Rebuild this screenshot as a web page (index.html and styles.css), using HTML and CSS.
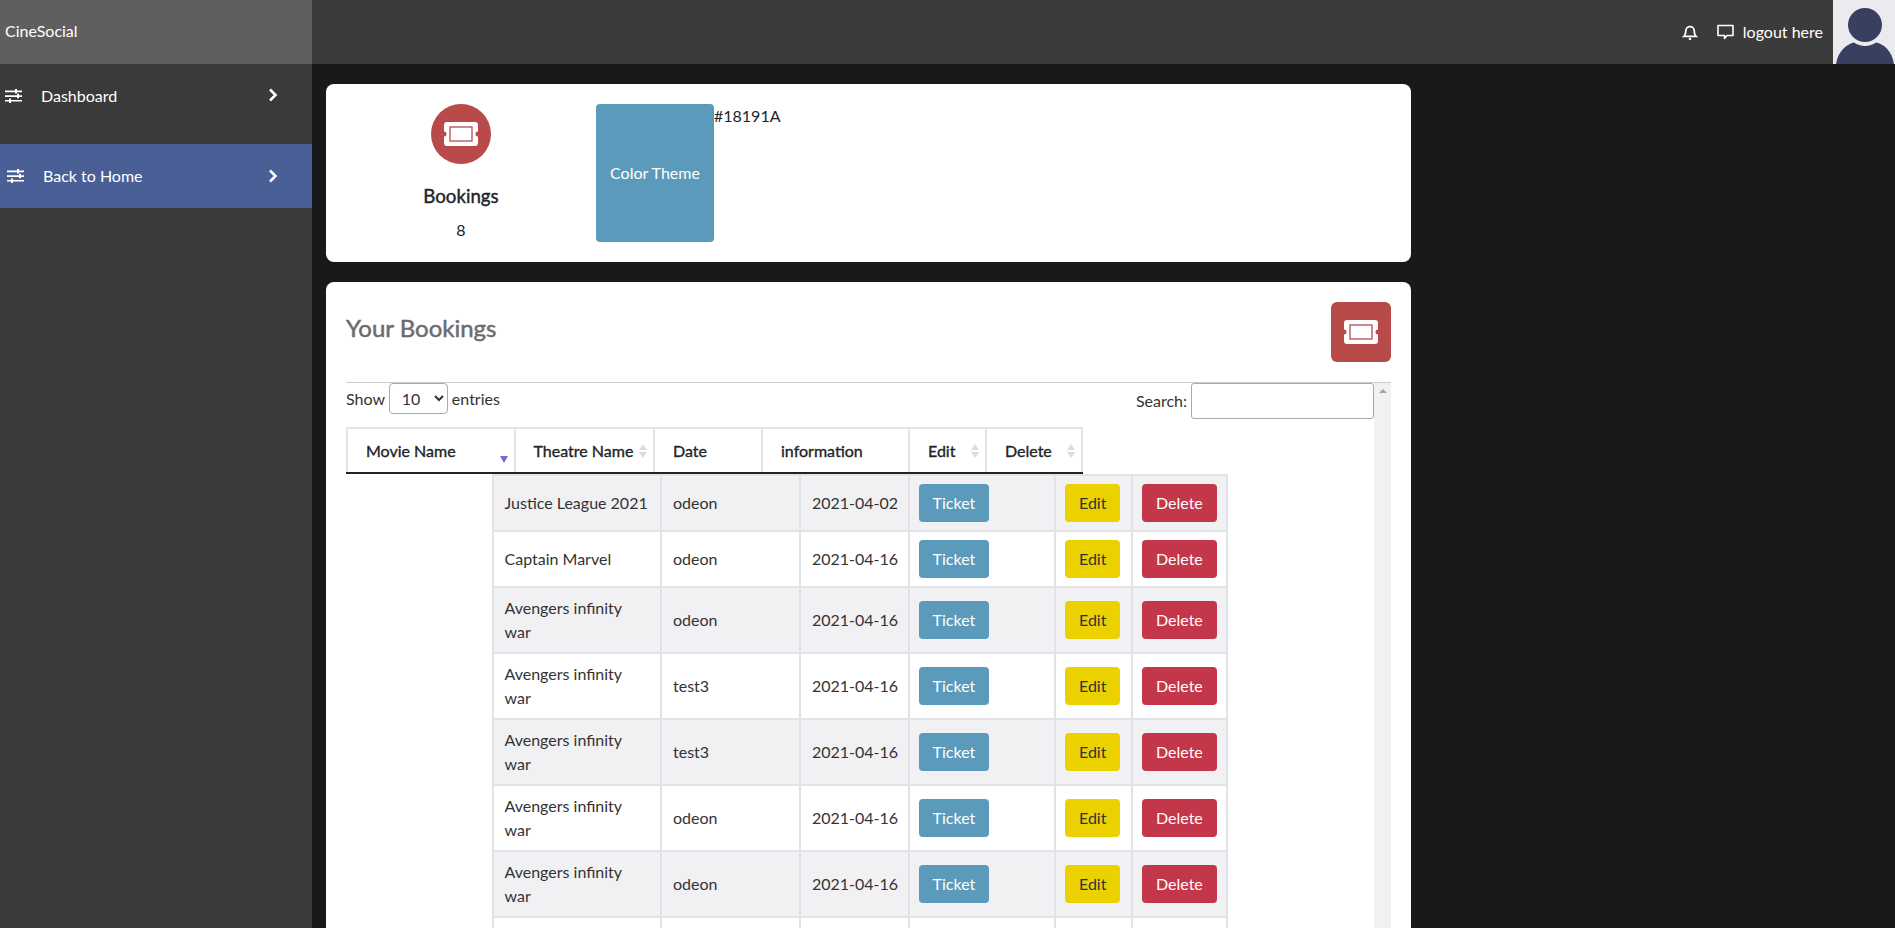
FILE: index.html
```html
<!DOCTYPE html>
<html lang="en">
<head>
<meta charset="utf-8">
<title>CineSocial</title>
<link rel="stylesheet" href="styles.css">
</head>
<body>
<svg class="defs" width="0" height="0" aria-hidden="true">
  <symbol id="ticket" viewBox="0 0 34 24">
    <path fill="#fff" d="M3 0H31a3 3 0 0 1 3 3V9.500a2.500 2.500 0 0 0 0 5V21a3 3 0 0 1-3 3H3a3 3 0 0 1-3-3V14.500a2.500 2.500 0 0 0 0-5V3a3 3 0 0 1 3-3Z"/>
    <rect x="6" y="5" width="22" height="14" fill="none" stroke="#b94a4a" stroke-width="1.300"/>
  </symbol>
  <symbol id="sliders" viewBox="0 0 17 14">
    <path fill="#fff" d="M0 1.500H17V3.200H0ZM0 6.200H17V7.900H0ZM0 10.900H17V12.600H0Z"/>
    <path fill="#fff" d="M10 0H12V4.500H10ZM12 4.800H14V9.300H12ZM4 9.500H6V14H4Z"/>
  </symbol>
  <symbol id="chevron" viewBox="0 0 10 14">
    <path fill="none" stroke="#fff" stroke-width="2.600" d="M2 1.500 7.500 7 2 12.500"/>
  </symbol>
</svg>

<header class="topbar">
  <div class="brand">CineSocial</div>
  <nav class="top-actions">
    <svg class="top-icon" viewBox="0 0 16 16"><path fill="none" stroke="#fff" stroke-width="1.800" d="M2 12.300c1.200-1.200 1.800-2.500 1.800-5.500a4.200 4.200 0 0 1 8.400 0c0 3 .6 4.300 1.800 5.500Z"/><circle cx="8" cy="15" r="1.300" fill="#fff"/></svg>
    <svg class="top-icon chat" viewBox="0 0 17 16"><path fill="none" stroke="#fff" stroke-width="1.600" stroke-linejoin="round" d="M1 1.500H16V11.500H10L7.500 14.500V11.500H1Z"/></svg>
    <a class="logout">logout here</a>
    <svg class="avatar" viewBox="0 0 62 64"><rect width="62" height="64" fill="#ebebef"/><circle cx="32" cy="25" r="17" fill="#383f5f"/><path fill="#383f5f" d="M3 64C5 51 14 44 21 42.500C27 47 37 47 43 42.500C51 44 59 51 61 64Z"/></svg>
  </nav>
</header>

<div class="shell">
  <aside class="sidebar">
    <a class="side-item dash">
      <svg class="side-icon"><use href="#sliders"/></svg>
      <span>Dashboard</span>
      <svg class="chev"><use href="#chevron"/></svg>
    </a>
    <a class="side-item home">
      <svg class="side-icon"><use href="#sliders"/></svg>
      <span>Back to Home</span>
      <svg class="chev"><use href="#chevron"/></svg>
    </a>
  </aside>

  <main class="main">
    <section class="card stats">
      <div class="stat">
        <div class="stat-circle"><svg class="ticket-lg"><use href="#ticket"/></svg></div>
        <h3>Bookings</h3>
        <p>8</p>
      </div>
      <button class="theme-btn">Color Theme</button>
      <span class="hex">#18191A</span>
    </section>

    <section class="card bookings">
      <div class="book-head">
        <h2>Your Bookings</h2>
        <div class="book-badge"><svg class="ticket-lg"><use href="#ticket"/></svg></div>
      </div>
      <hr class="rule">
      <div class="scroll-wrap">
        <div class="scroller">
          <div class="dt-controls">
            <label class="dt-len">Show <select><option>10</option></select> entries</label>
            <label class="dt-search">Search: <input type="text"></label>
          </div>
          <table class="head-table">
            <colgroup><col class="h1"><col class="h2"><col class="h3"><col class="h4"><col class="h5"><col class="h6"></colgroup>
            <thead>
              <tr>
                <th>Movie Name<i class="sort-active"></i></th>
                <th>Theatre Name<i class="sort"></i></th>
                <th>Date</th>
                <th>information</th>
                <th>Edit<i class="sort"></i></th>
                <th>Delete<i class="sort"></i></th>
              </tr>
            </thead>
          </table>
          <table class="body-table">
            <colgroup><col class="b1"><col class="b2"><col class="b3"><col class="b4"><col class="b5"><col class="b6"></colgroup>
            <tbody>
              <tr><td>Justice League 2021</td><td>odeon</td><td class="date">2021-04-02</td><td class="act"><a class="btn ticket">Ticket</a></td><td class="act"><a class="btn edit">Edit</a></td><td class="act"><a class="btn del">Delete</a></td></tr>
              <tr><td>Captain Marvel</td><td>odeon</td><td class="date">2021-04-16</td><td class="act"><a class="btn ticket">Ticket</a></td><td class="act"><a class="btn edit">Edit</a></td><td class="act"><a class="btn del">Delete</a></td></tr>
              <tr><td>Avengers infinity war</td><td>odeon</td><td class="date">2021-04-16</td><td class="act"><a class="btn ticket">Ticket</a></td><td class="act"><a class="btn edit">Edit</a></td><td class="act"><a class="btn del">Delete</a></td></tr>
              <tr><td>Avengers infinity war</td><td>test3</td><td class="date">2021-04-16</td><td class="act"><a class="btn ticket">Ticket</a></td><td class="act"><a class="btn edit">Edit</a></td><td class="act"><a class="btn del">Delete</a></td></tr>
              <tr><td>Avengers infinity war</td><td>test3</td><td class="date">2021-04-16</td><td class="act"><a class="btn ticket">Ticket</a></td><td class="act"><a class="btn edit">Edit</a></td><td class="act"><a class="btn del">Delete</a></td></tr>
              <tr><td>Avengers infinity war</td><td>odeon</td><td class="date">2021-04-16</td><td class="act"><a class="btn ticket">Ticket</a></td><td class="act"><a class="btn edit">Edit</a></td><td class="act"><a class="btn del">Delete</a></td></tr>
              <tr><td>Avengers infinity war</td><td>odeon</td><td class="date">2021-04-16</td><td class="act"><a class="btn ticket">Ticket</a></td><td class="act"><a class="btn edit">Edit</a></td><td class="act"><a class="btn del">Delete</a></td></tr>
              <tr class="last-row"><td></td><td></td><td></td><td></td><td></td><td></td></tr>
            </tbody>
          </table>
        </div>
        <div class="track" aria-hidden="true"><i class="track-up"></i></div>
      </div>
    </section>
  </main>
</div>
</body>
</html>
```
FILE: styles.css
```css
* { box-sizing: border-box; }
html, body { margin: 0; height: 100%; overflow: hidden; }
body {
  background: #18191a;
  color: #212529;
  font: 400 16px/24px Lato, "Liberation Sans", sans-serif;
  display: flex;
  flex-direction: column;
}
.defs { position: absolute; }

.topbar { display: flex; height: 64px; flex: none; background: #3b3b3b; color: #fff; }
.brand { width: 312px; padding-left: 5px; line-height: 62px; background: #5f5f5f; }
.top-actions { margin-left: auto; display: flex; align-items: center; }
.top-icon { width: 16px; height: 16px; margin-right: 19px; }
.top-icon.chat { width: 17px; margin-right: 9px; }
.logout { margin-right: 10px; }
.avatar { width: 62px; height: 64px; display: block; }

.shell { display: flex; flex: 1; min-height: 0; }
.sidebar { width: 312px; flex: none; background: #3a3a3a; color: #fff; }
.side-item { display: flex; }
.side-item.dash { height: 80px; padding: 20px 34px 0 5px; align-items: flex-start; }
.side-item.home { height: 64px; padding: 0 34px 0 7px; align-items: center; background: #4a5f96; }
.side-icon { width: 17px; height: 14px; }
.dash .side-icon { margin-top: 5px; }
.side-item span { margin-left: 19px; }
.chev { width: 10px; height: 14px; margin-left: auto; }
.dash .chev { margin-top: 4px; }

.main { flex: 1; min-width: 0; padding: 20px 0 0 14px; display: flex; flex-direction: column; gap: 20px; }
.card { width: 1085px; background: #fff; border-radius: 8px; padding: 20px; flex: none; }

.stats { display: flex; align-items: flex-start; height: 178px; }
.stat { width: 230px; display: flex; flex-direction: column; align-items: center; }
.stat-circle { width: 60px; height: 60px; border-radius: 50%; background: #b94a4a; display: flex; align-items: center; justify-content: center; }
.ticket-lg { width: 34px; height: 24px; display: block; }
.stat h3 { margin: 19px 0 0; font-size: 18.700px; font-weight: 400; -webkit-text-stroke: 0.4px currentColor; line-height: 26px; }
.stat p { margin: 9px 0 0; line-height: 24px; }
.theme-btn { width: 118px; height: 138px; margin-left: 20px; padding: 0; border: 0; border-radius: 4px; background: #5b9aba; color: #fff; font: inherit; }
.hex { line-height: 24px; }

.bookings { height: 700px; }
.book-head { display: flex; justify-content: space-between; align-items: flex-start; height: 60px; }
.book-head h2 { margin: 11px 0 0; font-size: 24px; font-weight: 400; -webkit-text-stroke: 0.5px currentColor; line-height: 30px; color: #6c6c6c; }
.book-badge { width: 60px; height: 60px; border-radius: 6px; background: #b94a4a; display: flex; align-items: center; justify-content: center; }
.rule { height: 1px; margin: 20px 0 0; border: 0; background: #ccc; }

.scroll-wrap { display: flex; height: 560px; }
.scroller { flex: 1; min-width: 0; }
.track { position: relative; width: 17px; flex: none; background: #f1f1f1; }
.track-up { position: absolute; left: 5px; top: 6px; border-left: 4px solid transparent; border-right: 4px solid transparent; border-bottom: 4px solid #a3a3a3; }

.dt-controls { display: flex; justify-content: space-between; align-items: flex-start; height: 44px; color: #333; }
.dt-len select { width: 59px; height: 31px; margin: 0; padding: 0 0 0 8px; border: 1px solid #aaa; border-radius: 4px; background: #fff; font: inherit; color: #333; }
.dt-search { display: flex; align-items: center; gap: 4px; height: 36px; }
.dt-search input { width: 183px; height: 36px; padding: 0 6px; border: 1px solid #aaa; border-radius: 3px; background: #fff; }

table { border-collapse: collapse; table-layout: fixed; }
.head-table { width: 735px; }
.h1 { width: 167.500px; } .h2 { width: 139.500px; } .h3 { width: 108px; }
.h4 { width: 147px; } .h5 { width: 77px; } .h6 { width: 96px; }
th {
  position: relative;
  height: 45px;
  padding: 0 0 0 18px;
  border: 2px solid #e4e5e9;
  border-bottom: 2px solid #222;
  text-align: left;
  font-weight: 400;
  -webkit-text-stroke: 0.35px currentColor;
  line-height: 24px;
  white-space: nowrap;
}
.sort, .sort-active { position: absolute; right: 6px; top: 50%; width: 8px; height: 14px; margin-top: -7px; }
.sort::before, .sort::after, .sort-active::after { content: ""; position: absolute; left: 0; border-left: 4px solid transparent; border-right: 4px solid transparent; }
.sort::before { top: 0; border-bottom: 6px solid #dcdcdc; }
.sort::after { bottom: 0; border-top: 6px solid #dcdcdc; }
.sort-active::after { bottom: -5px; border-top: 7px solid #7a6bd6; }

.body-table { width: 735px; margin: 0 auto; }
.b1 { width: 168.500px; } .b2 { width: 139px; } .b3 { width: 108.600px; }
.b4 { width: 146.400px; } .b5 { width: 77px; } .b6 { width: 95.500px; }
td { padding: 8px 11px; border: 2px solid #e1e3e8; color: #333; vertical-align: middle; }
td.date { white-space: nowrap; }
td.act { padding: 8px 9px; line-height: 0; }
tbody tr:nth-child(odd) td { background: #f1f1f4; }
.last-row td { height: 66px; }
.btn { display: inline-block; height: 38px; padding: 7px 14px; border-radius: 4px; line-height: 24px; vertical-align: top; }
.ticket { background: #5b9aba; color: #fff; }
.edit { background: #ecd100; color: #333; }
.del { background: #c43649; color: #fff; }
```
